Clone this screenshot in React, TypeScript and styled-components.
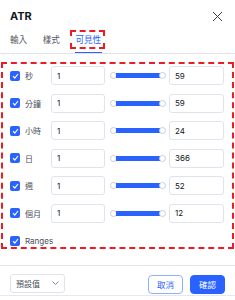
import { createGlobalStyle } from "styled-components";
import styled from "styled-components";

const GlobalStyle = createGlobalStyle`
  html, body {
    margin: 0;
    padding: 0;
    background: #ffffff;
  }
  body {
    font-family: Inter, "Noto Sans CJK TC", sans-serif;
    color: #131722;
  }
`;

const Dialog = styled.div`
  width: 235px;
  height: 296px;
  display: flex;
  flex-direction: column;
  background: #ffffff;
  border-bottom: 1px solid #e6e8ee;
  box-sizing: border-box;
`;

const Header = styled.div`
  height: 30px;
  padding: 2px 12px 0 10px;
  box-sizing: border-box;
  display: flex;
  align-items: center;
  justify-content: space-between;
`;

const Title = styled.div`
  font-size: 11px;
  font-weight: 700;
  color: #131722;
`;

const Close = styled.button`
  width: 11px;
  height: 11px;
  padding: 0;
  border: none;
  background: none;
  display: flex;
  color: #3c3f48;
`;

const TabBar = styled.div`
  height: 24px;
  padding-left: 5px;
  display: flex;
  gap: 6.5px;
  border-bottom: 1px solid #e0e3eb;
  box-sizing: border-box;
`;

const Tab = styled.div`
  display: flex;
  flex-direction: column;
  align-items: stretch;
`;

const TabLabel = styled.span<{ $active?: boolean }>`
  font-size: 8.6px;
  line-height: 13px;
  padding: 2px 2px 0 3px;
  border: 2px dashed ${(p) => (p.$active ? "#ec1c24" : "transparent")};
  color: ${(p) => (p.$active ? "#2962ff" : "#555965")};
  white-space: nowrap;
`;

const Underline = styled.div<{ $active?: boolean }>`
  height: 2px;
  margin: 3px 3px 0 5px;
  background: ${(p) => (p.$active ? "#2962ff" : "transparent")};
`;

const Body = styled.div`
  margin: 8px 1px 16px;
  padding: 2px 8px 1px 7px;
  border: 2px dashed #ec1c24;
  display: flex;
  flex-direction: column;
  gap: 8.6px;
`;

const Row = styled.div`
  display: grid;
  grid-template-columns: 41px 54px 1fr 55px;
  align-items: center;
  height: 19px;
`;

const RangesRow = styled.div`
  display: flex;
  align-items: center;
  gap: 5px;
  height: 10px;
  margin-top: 4px;
`;

const Check = styled.span`
  width: 10px;
  height: 10px;
  border-radius: 2px;
  background: #2962ff;
  display: inline-flex;
  align-items: center;
  justify-content: center;
  flex: none;
`;

const CheckCell = styled.div`
  display: flex;
  align-items: center;
  gap: 5px;
`;

const Label = styled.span`
  font-size: 8px;
  color: #4a4e5a;
  white-space: nowrap;
`;

const Field = styled.div`
  height: 19px;
  border: 1px solid #e0e3eb;
  border-radius: 3px;
  box-sizing: border-box;
  padding-left: 5px;
  display: flex;
  align-items: center;
  font-size: 8px;
  color: #131722;
`;

const Slider = styled.div`
  margin: 0 3px 0 5px;
  height: 8px;
  display: flex;
  align-items: center;
`;

const Knob = styled.span`
  width: 7px;
  height: 7px;
  border-radius: 50%;
  border: 1px solid #c9ccd4;
  background: #ffffff;
  box-sizing: border-box;
  flex: none;
`;

const Track = styled.span`
  flex: 1;
  height: 5px;
  background: #2962ff;
  margin: 0 -1px;
`;

const Footer = styled.div`
  flex: 1;
  border-top: 1px solid #e0e3eb;
  padding: 8px 10px 0;
  display: flex;
  align-items: flex-start;
  gap: 7px;
`;

const Select = styled.div`
  width: 55px;
  height: 19px;
  margin-right: auto;
  border: 1px solid #e0e3eb;
  border-radius: 3px;
  box-sizing: border-box;
  padding: 0 5px;
  display: flex;
  align-items: center;
  justify-content: space-between;
  font-size: 8px;
  color: #4a4e5a;
`;

const Button = styled.button<{ $primary?: boolean }>`
  width: 35px;
  height: 19px;
  margin-top: 1px;
  border-radius: 4px;
  box-sizing: border-box;
  font-family: inherit;
  font-size: 8.5px;
  padding: 0;
  border: 1px solid ${(p) => (p.$primary ? "#2962ff" : "#8fb0ff")};
  background: ${(p) => (p.$primary ? "#2962ff" : "#ffffff")};
  color: ${(p) => (p.$primary ? "#ffffff" : "#2962ff")};
`;

const CheckMark = () => (
  <svg width="7" height="6" viewBox="0 0 7 6">
    <path d="M1 3.2 L2.8 5 L6 1" fill="none" stroke="#fff" strokeWidth="1.2" />
  </svg>
);

const rows = [
  { label: "秒", max: "59" },
  { label: "分鐘", max: "59" },
  { label: "小時", max: "24" },
  { label: "日", max: "366" },
  { label: "週", max: "52" },
  { label: "個月", max: "12" },
];

const tabs = [
  { name: "輸入", active: false },
  { name: "樣式", active: false },
  { name: "可見性", active: true },
];

export default function App() {
  return (
    <>
      <GlobalStyle />
      <Dialog>
        <Header>
          <Title>ATR</Title>
          <Close>
            <svg width="11" height="11" viewBox="0 0 11 11">
              <path d="M1 1 L10 10 M10 1 L1 10" stroke="currentColor" strokeWidth="1" />
            </svg>
          </Close>
        </Header>
        <TabBar>
          {tabs.map((t) => (
            <Tab key={t.name}>
              <TabLabel $active={t.active}>{t.name}</TabLabel>
              <Underline $active={t.active} />
            </Tab>
          ))}
        </TabBar>
        <Body>
          {rows.map((r) => (
            <Row key={r.label}>
              <CheckCell>
                <Check>
                  <CheckMark />
                </Check>
                <Label>{r.label}</Label>
              </CheckCell>
              <Field>1</Field>
              <Slider>
                <Knob />
                <Track />
                <Knob />
              </Slider>
              <Field>{r.max}</Field>
            </Row>
          ))}
          <RangesRow>
            <Check>
              <CheckMark />
            </Check>
            <Label>Ranges</Label>
          </RangesRow>
        </Body>
        <Footer>
          <Select>
            預設值
            <svg width="7" height="4" viewBox="0 0 7 4">
              <path d="M0.5 0.5 L3.5 3.5 L6.5 0.5" fill="none" stroke="#787b86" strokeWidth="0.9" />
            </svg>
          </Select>
          <Button>取消</Button>
          <Button $primary>確認</Button>
        </Footer>
      </Dialog>
    </>
  );
}
